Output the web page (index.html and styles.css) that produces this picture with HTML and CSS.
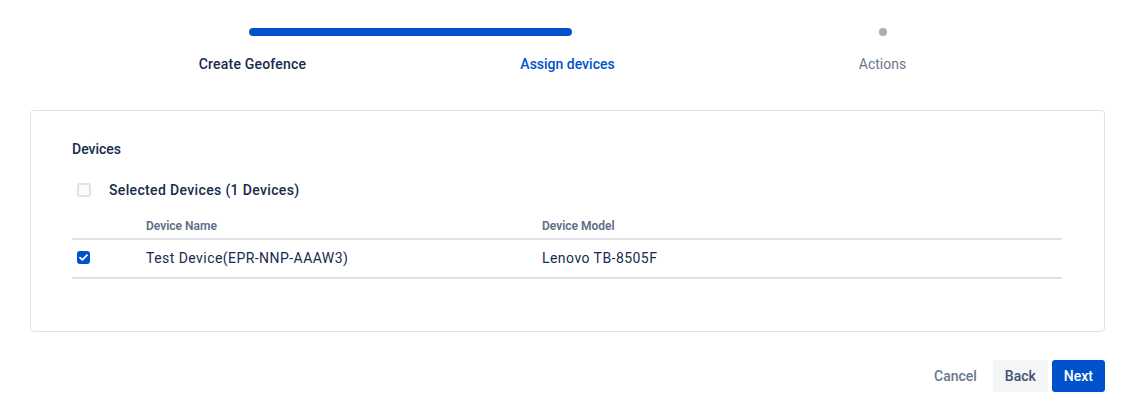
FILE: index.html
```html
<!DOCTYPE html>
<html lang="en">
<head>
    <meta charset="UTF-8">
    <meta name="viewport" content="width=device-width, initial-scale=1.0">
    <link rel="stylesheet" href="styles.css">
    <title>Create Geofence</title>
</head>
<body>
    <div class="page">
        <div class="tracker">
            <div class="bar"></div>
            <div class="dot"></div>
            <div class="step done">Create Geofence</div>
            <div class="step current">Assign devices</div>
            <div class="step">Actions</div>
        </div>

        <div class="card">
            <div class="card-title">Devices</div>
            <div class="select-all">
                <span class="checkbox"></span>
                <span>Selected Devices (1 Devices)</span>
            </div>
            <table class="devices">
                <thead>
                    <tr>
                        <th class="col-check"></th>
                        <th class="col-name">Device Name</th>
                        <th>Device Model</th>
                    </tr>
                </thead>
                <tbody>
                    <tr>
                        <td class="col-check">
                            <span class="checkbox checked">
                                <svg width="9" height="7" viewBox="0 0 9 7"><path d="M1 3.6 L3.4 5.8 L8 1.2" fill="none" stroke="#fff" stroke-width="1.8" stroke-linecap="round" stroke-linejoin="round"/></svg>
                            </span>
                        </td>
                        <td>Test Device(EPR-NNP-AAAW3)</td>
                        <td>Lenovo TB-8505F</td>
                    </tr>
                </tbody>
            </table>
        </div>

        <div class="footer">
            <button class="btn subtle">Cancel</button>
            <button class="btn">Back</button>
            <button class="btn primary">Next</button>
        </div>
    </div>
</body>
</html>
```

FILE: styles.css
```css
body {
    font-family: Roboto, "Noto Sans", sans-serif;
    margin: 0;
    padding: 0;
    color: #172b4d;
    font-size: 14px;
    background-color: #fff;
}

.page {
    padding: 0 16px 0 30px;
}

.tracker {
    display: grid;
    grid-template-columns: repeat(3, 315px);
    grid-template-rows: 8px 20px;
    row-gap: 18px;
    justify-content: center;
    padding-top: 28px;
}

.bar {
    grid-column: 1 / 3;
    grid-row: 1;
    margin: 0 153.5px;
    height: 8px;
    border-radius: 4px;
    background-color: #0052cc;
}

.dot {
    grid-column: 3;
    grid-row: 1;
    justify-self: center;
    width: 8px;
    height: 8px;
    border-radius: 50%;
    background-color: #a5adba;
}

.step {
    grid-row: 2;
    text-align: center;
    line-height: 20px;
    color: #6b778c;
}

.step.done {
    color: #172b4d;
    font-weight: 500;
    letter-spacing: 0.2px;
}

.step.current {
    color: #0052cc;
    font-weight: 500;
}

.card {
    margin-top: 36px;
    border: 1px solid #dfe1e6;
    border-radius: 4px;
    padding: 28px 42px 52px 41px;
}

.card-title {
    font-weight: 500;
    line-height: 20px;
}

.select-all {
    display: flex;
    align-items: center;
    gap: 18px;
    margin-top: 21px;
    padding-left: 5px;
    line-height: 20px;
    font-weight: 500;
    letter-spacing: 0.35px;
}

.checkbox {
    display: inline-flex;
    align-items: center;
    justify-content: center;
    box-sizing: border-box;
    width: 14px;
    height: 14px;
    border: 2px solid #dfe1e6;
    border-radius: 3px;
    background-color: #fafbfc;
}

.checkbox.checked {
    width: 13px;
    height: 13px;
    border: none;
    background-color: #0052cc;
}

.checkbox svg {
    display: block;
}

.devices {
    width: 100%;
    margin-top: 18px;
    border-collapse: collapse;
}

.devices th {
    text-align: left;
    font-size: 12px;
    font-weight: 600;
    color: #5e6c84;
    line-height: 16px;
    padding: 0 0 4px;
    border-bottom: 2px solid #dfe1e6;
}

.devices td {
    line-height: 20px;
    padding: 8px 0 9px;
    font-weight: 400;
    letter-spacing: 0.45px;
    border-bottom: 2px solid #dfe1e6;
    vertical-align: middle;
}

.devices .col-check {
    width: 69px;
    padding-left: 5px;
}

.devices td.col-check {
    padding-top: 6px;
    padding-bottom: 11px;
}

.devices td.col-check .checkbox {
    vertical-align: middle;
}

.devices .col-name {
    width: 396px;
}

.footer {
    display: flex;
    justify-content: flex-end;
    gap: 4px;
    margin-top: 28px;
}

.btn {
    font-family: inherit;
    font-size: 14px;
    font-weight: 500;
    height: 32px;
    padding: 0 12px;
    border: none;
    border-radius: 3px;
    background-color: #f4f5f7;
    color: #42526e;
    cursor: pointer;
}

.btn.subtle {
    background-color: transparent;
    color: #6b778c;
}

.btn.primary {
    background-color: #0052cc;
    color: #fff;
}
```
